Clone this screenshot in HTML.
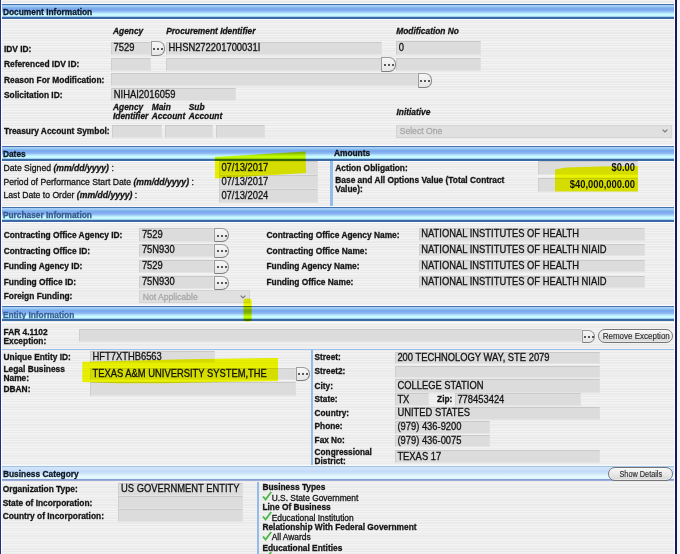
<!DOCTYPE html>
<html><head><meta charset="utf-8"><style>
*{margin:0;padding:0;box-sizing:border-box}
html,body{width:680px;height:554px;overflow:hidden;background:#f4f4f6}
body{position:relative;font-family:"Liberation Sans",sans-serif}
#pg{position:absolute;left:0;top:0;width:680px;height:554px;filter:blur(0.45px);
 background:repeating-linear-gradient(to bottom,#f2f2f2 0px,#f2f2f2 1.29px,#eaeaea 1.29px,#eaeaea 2.58px)}
.t{position:absolute;white-space:nowrap;line-height:1;-webkit-text-stroke:0.28px currentColor;transform:scaleY(1.1);transform-origin:0 0.8465em}
.ln{position:absolute}
.sv{position:absolute;overflow:visible}
.in{position:absolute;background:#dcdcdc;border-top:1px solid #c9c9c9;border-left:1px solid #cfcfcf;border-bottom:1px solid #e4e4e4;border-right:1px solid #e0e0e0}
.sel{background:#e0e0e0;border:1px solid #d4d4d4}
.btn{position:absolute;background:linear-gradient(#f6f6f6,#e6e6e6);border:1px solid #9c9c9c;border-bottom:1.4px solid #7e7e7e;border-right:1.3px solid #868686;border-radius:0 7px 7px 0}
.btn i{position:absolute;width:2px;height:2px;background:#262626;border-radius:50%}
.pill{position:absolute;border:1.2px solid #747474;border-radius:8px;background:linear-gradient(#f8f8f8,#e6e6e6 60%,#d4d4d4);text-align:center;color:#2c2c2c;line-height:11px;box-shadow:inset 0 0 0 0.6px #fafafa}
.pill span{display:inline-block;vertical-align:top;white-space:nowrap;-webkit-text-stroke:0.15px currentColor}
.hdr{position:absolute;border-top:1px solid #4672ac;border-bottom:2.3px solid #3a69a6;background:linear-gradient(to bottom,#aed0f8 0px,#9ccaf4 1.6px,#78aeea 3px,#80a8f0 4.5px,#8cb8f0 6.2px,#b4e4ff 8px,#c8fcff 9.4px,#c4f6ff 10.8px,#8ab8e0 100%)}
.hdr::before{content:"";position:absolute;left:0;right:0;top:-2px;height:1px;background:#fbfbfb}
.hdr::after{content:"";position:absolute;left:0;right:0;bottom:-3.3px;height:1px;background:#ffffff}
.hdr2{position:absolute;background:linear-gradient(to bottom,#98bcd8 0px,#a8c8e4 0.8px,#d4e6fc 1.6px,#c6dcf8 4.5px,#c4daf8 6px,#e2f8ff 10px,#e8fcff 12.4px,#8a9ed6 13.4px,#8a9ed6 14.3px,#c8d0ea 100%)}
.hdr2::before{content:"";position:absolute;left:0;right:0;top:-1.6px;height:1.4px;background:#f6f8ff}
#lb{position:absolute;left:0;top:0;width:1.3px;height:554px;background:#23307e}
#lw{position:absolute;left:1.3px;top:0;width:1px;height:554px;background:#fafafa}
#rw2{position:absolute;left:674px;top:0;width:1px;height:554px;background:#fafafa}
#rb{position:absolute;left:675.4px;top:0;width:1.9px;height:554px;background:#141a60}
#rw{position:absolute;left:677px;top:0;width:3px;height:554px;background:#f6f6f8}
</style></head>
<body><div id="pg">
<div class="hdr" style="left:2px;top:4px;width:672px;height:15.2px"></div>
<div class="t" style="left:2.9px;top:8.11px;font-size:8.4px;font-weight:bold;color:#0c1828;">Document Information</div>
<div class="t" style="left:113px;top:26.66px;font-size:8.37px;font-weight:bold;font-style:italic;color:#141414;">Agency</div>
<div class="t" style="left:166.25px;top:26.66px;font-size:8.37px;font-weight:bold;font-style:italic;color:#141414;">Procurement Identifier</div>
<div class="t" style="left:396.25px;top:26.66px;font-size:8.37px;font-weight:bold;font-style:italic;color:#141414;">Modification No</div>
<div class="t" style="left:4px;top:44.91px;font-size:8.37px;font-weight:bold;color:#141414;">IDV ID:</div>
<div class="in" style="left:111px;top:41.5px;width:40.00px;height:13.50px;"></div>
<div class="t" style="left:113.6px;top:43.28px;font-size:9.4px;font-weight:normal;color:#141414;transform:scaleY(1.12);">7529</div>
<div class="btn" style="left:151px;top:41px;width:13.75px;height:14.60px"><i style="left:1.28px;top:5.70px"></i><i style="left:5.28px;top:5.70px"></i><i style="left:9.28px;top:5.70px"></i></div>
<div class="in" style="left:166px;top:41.5px;width:215.75px;height:13.50px;"></div>
<div class="t" style="left:168.6px;top:43.28px;font-size:9.4px;font-weight:normal;color:#141414;transform:scaleY(1.12);">HHSN272201700031I</div>
<div class="in" style="left:396.25px;top:41.25px;width:84.50px;height:13.75px;"></div>
<div class="t" style="left:398.85px;top:43.15px;font-size:9.4px;font-weight:normal;color:#141414;transform:scaleY(1.12);">0</div>
<div class="t" style="left:4px;top:60.11px;font-size:8.37px;font-weight:bold;color:#141414;">Referenced IDV ID:</div>
<div class="in" style="left:111px;top:57.5px;width:40.00px;height:13.50px;"></div>
<div class="in" style="left:166px;top:57.5px;width:215.50px;height:13.50px;"></div>
<div class="btn" style="left:381.25px;top:56.75px;width:15.00px;height:15.00px"><i style="left:1.90px;top:5.90px"></i><i style="left:5.90px;top:5.90px"></i><i style="left:9.90px;top:5.90px"></i></div>
<div class="in" style="left:396.25px;top:57.5px;width:84.50px;height:13.25px;"></div>
<div class="t" style="left:4px;top:75.91px;font-size:8.37px;font-weight:bold;color:#141414;">Reason For Modification:</div>
<div class="in" style="left:111px;top:73px;width:306.50px;height:12.50px;"></div>
<div class="btn" style="left:417.5px;top:73px;width:14.50px;height:14.50px"><i style="left:1.65px;top:5.65px"></i><i style="left:5.65px;top:5.65px"></i><i style="left:9.65px;top:5.65px"></i></div>
<div class="t" style="left:4px;top:90.61px;font-size:8.37px;font-weight:bold;color:#141414;">Solicitation ID:</div>
<div class="in" style="left:111.25px;top:88.25px;width:125.00px;height:12.50px;"></div>
<div class="t" style="left:113.85px;top:89.53px;font-size:9.4px;font-weight:normal;color:#141414;transform:scaleY(1.12);">NIHAI2016059</div>
<div class="t" style="left:113px;top:103.11px;font-size:8.37px;font-weight:bold;font-style:italic;color:#141414;">Agency</div>
<div class="t" style="left:113px;top:112.31px;font-size:8.37px;font-weight:bold;font-style:italic;color:#141414;">Identifier</div>
<div class="t" style="left:151.75px;top:103.11px;font-size:8.37px;font-weight:bold;font-style:italic;color:#141414;">Main</div>
<div class="t" style="left:151.75px;top:112.31px;font-size:8.37px;font-weight:bold;font-style:italic;color:#141414;">Account</div>
<div class="t" style="left:188.75px;top:103.11px;font-size:8.37px;font-weight:bold;font-style:italic;color:#141414;">Sub</div>
<div class="t" style="left:188.75px;top:112.31px;font-size:8.37px;font-weight:bold;font-style:italic;color:#141414;">Account</div>
<div class="t" style="left:396.5px;top:107.61px;font-size:8.37px;font-weight:bold;font-style:italic;color:#141414;">Initiative</div>
<div class="t" style="left:4px;top:127.41px;font-size:8.37px;font-weight:bold;color:#141414;">Treasury Account Symbol:</div>
<div class="in" style="left:112px;top:124.5px;width:50.00px;height:13.00px;"></div>
<div class="in" style="left:164.5px;top:124.5px;width:48.50px;height:13.00px;"></div>
<div class="in" style="left:215.5px;top:124.5px;width:49.00px;height:13.00px;"></div>
<div class="in sel" style="left:396.2px;top:124.7px;width:275.60px;height:13.30px;"></div>
<div class="t" style="left:399.7px;top:127.17px;font-size:8.6px;font-weight:normal;color:#a8a8a8;">Select One</div>
<svg class="sv" style="left:660.8px;top:128.35px" width="8" height="6" viewBox="0 0 8 6"><path d="M1.6 1.6 L4 4 L6.4 1.6" fill="none" stroke="#7a7a7a" stroke-width="1.2"/></svg>
<div class="hdr" style="left:2px;top:146px;width:672px;height:15px"></div>
<div class="t" style="left:2.9px;top:149.69px;font-size:8.4px;font-weight:bold;color:#0c1828;">Dates</div>
<div class="t" style="left:333.9px;top:149.39px;font-size:8.4px;font-weight:bold;color:#141414;">Amounts</div>
<div class="t" style="left:3.5px;top:164.28px;font-size:8.65px;font-weight:normal;color:#141414;">Date Signed <b><i>(mm/dd/yyyy)</i></b> :</div>
<div class="t" style="left:3.5px;top:177.78px;font-size:8.65px;font-weight:normal;color:#141414;">Period of Performance Start Date <b><i>(mm/dd/yyyy)</i></b> :</div>
<div class="t" style="left:3.5px;top:191.28px;font-size:8.65px;font-weight:normal;color:#141414;">Last Date to Order <b><i>(mm/dd/yyyy)</i></b> :</div>
<div class="in" style="left:218.8px;top:161.3px;width:99.50px;height:13.90px;"></div>
<div class="t" style="left:221.4px;top:163.28px;font-size:9.4px;font-weight:normal;color:#141414;transform:scaleY(1.12);">07/13/2017</div>
<div class="in" style="left:218.8px;top:175.2px;width:99.50px;height:13.40px;"></div>
<div class="t" style="left:221.4px;top:176.93px;font-size:9.4px;font-weight:normal;color:#141414;transform:scaleY(1.12);">07/13/2017</div>
<div class="in" style="left:218.8px;top:188.6px;width:99.50px;height:14.30px;"></div>
<div class="t" style="left:221.4px;top:190.78px;font-size:9.4px;font-weight:normal;color:#141414;transform:scaleY(1.12);">07/13/2024</div>
<div class="ln" style="left:330px;top:161px;width:2.5px;height:45.5px;background:#94bcea"></div>
<div class="t" style="left:335.3px;top:164.11px;font-size:8.37px;font-weight:bold;color:#141414;">Action Obligation:</div>
<div class="t" style="left:335.3px;top:175.91px;font-size:8.37px;font-weight:bold;color:#141414;">Base and All Options Value (Total Contract</div>
<div class="t" style="left:335.3px;top:184.71px;font-size:8.37px;font-weight:bold;color:#141414;">Value):</div>
<div class="in" style="left:537.6px;top:160.6px;width:100.00px;height:14.10px;"></div>
<div class="t" style="left:537.6px;width:97.40px;text-align:right;top:162.68px;font-size:9.4px;font-weight:bold;color:#141414;-webkit-text-stroke:0">$0.00</div>
<div class="in" style="left:537.6px;top:177.8px;width:100.00px;height:14.10px;"></div>
<div class="t" style="left:537.6px;width:97.40px;text-align:right;top:179.88px;font-size:9.4px;font-weight:bold;color:#141414;-webkit-text-stroke:0">$40,000,000.00</div>
<div class="hdr" style="left:2px;top:207px;width:672px;height:15px"></div>
<div class="t" style="left:2.9px;top:210.73px;font-size:8.35px;font-weight:bold;color:#345a8a;">Purchaser Information</div>
<div class="t" style="left:3.7px;top:231.01px;font-size:8.37px;font-weight:bold;color:#141414;">Contracting Office Agency ID:</div>
<div class="in" style="left:139.3px;top:228.2px;width:74.70px;height:13.40px;"></div>
<div class="t" style="left:141.9px;top:229.93px;font-size:9.4px;font-weight:normal;color:#141414;transform:scaleY(1.12);">7529</div>
<div class="btn" style="left:214px;top:228.2px;width:14.80px;height:14.20px"><i style="left:1.80px;top:5.50px"></i><i style="left:5.80px;top:5.50px"></i><i style="left:9.80px;top:5.50px"></i></div>
<div class="t" style="left:266.5px;top:231.01px;font-size:8.37px;font-weight:bold;color:#141414;">Contracting Office Agency Name:</div>
<div class="in" style="left:418.7px;top:228px;width:226.30px;height:12.60px;"></div>
<div class="t" style="left:421.3px;top:229.33px;font-size:9.4px;font-weight:normal;color:#141414;transform:scaleY(1.12);">NATIONAL INSTITUTES OF HEALTH</div>
<div class="t" style="left:3.7px;top:246.51px;font-size:8.37px;font-weight:bold;color:#141414;">Contracting Office ID:</div>
<div class="in" style="left:139.3px;top:243.7px;width:74.70px;height:13.30px;"></div>
<div class="t" style="left:141.9px;top:245.38px;font-size:9.4px;font-weight:normal;color:#141414;transform:scaleY(1.12);">75N930</div>
<div class="btn" style="left:214px;top:243.7px;width:14.80px;height:14.10px"><i style="left:1.80px;top:5.45px"></i><i style="left:5.80px;top:5.45px"></i><i style="left:9.80px;top:5.45px"></i></div>
<div class="t" style="left:266.5px;top:246.51px;font-size:8.37px;font-weight:bold;color:#141414;">Contracting Office Name:</div>
<div class="in" style="left:418.7px;top:243.8px;width:226.30px;height:12.70px;"></div>
<div class="t" style="left:421.3px;top:245.18px;font-size:9.4px;font-weight:normal;color:#141414;transform:scaleY(1.12);">NATIONAL INSTITUTES OF HEALTH NIAID</div>
<div class="t" style="left:3.7px;top:262.31px;font-size:8.37px;font-weight:bold;color:#141414;">Funding Agency ID:</div>
<div class="in" style="left:139.3px;top:259.7px;width:74.70px;height:13.40px;"></div>
<div class="t" style="left:141.9px;top:261.43px;font-size:9.4px;font-weight:normal;color:#141414;transform:scaleY(1.12);">7529</div>
<div class="btn" style="left:214px;top:259.7px;width:14.80px;height:14.20px"><i style="left:1.80px;top:5.50px"></i><i style="left:5.80px;top:5.50px"></i><i style="left:9.80px;top:5.50px"></i></div>
<div class="t" style="left:266.5px;top:262.31px;font-size:8.37px;font-weight:bold;color:#141414;">Funding Agency Name:</div>
<div class="in" style="left:418.7px;top:259.7px;width:226.30px;height:12.70px;"></div>
<div class="t" style="left:421.3px;top:261.08px;font-size:9.4px;font-weight:normal;color:#141414;transform:scaleY(1.12);">NATIONAL INSTITUTES OF HEALTH</div>
<div class="t" style="left:3.7px;top:277.81px;font-size:8.37px;font-weight:bold;color:#141414;">Funding Office ID:</div>
<div class="in" style="left:139.3px;top:275.6px;width:74.70px;height:13.40px;"></div>
<div class="t" style="left:141.9px;top:277.33px;font-size:9.4px;font-weight:normal;color:#141414;transform:scaleY(1.12);">75N930</div>
<div class="btn" style="left:214px;top:275.6px;width:14.80px;height:14.20px"><i style="left:1.80px;top:5.50px"></i><i style="left:5.80px;top:5.50px"></i><i style="left:9.80px;top:5.50px"></i></div>
<div class="t" style="left:266.5px;top:277.81px;font-size:8.37px;font-weight:bold;color:#141414;">Funding Office Name:</div>
<div class="in" style="left:418.7px;top:275.6px;width:226.30px;height:12.70px;"></div>
<div class="t" style="left:421.3px;top:276.98px;font-size:9.4px;font-weight:normal;color:#141414;transform:scaleY(1.12);">NATIONAL INSTITUTES OF HEALTH NIAID</div>
<div class="t" style="left:3.7px;top:292.21px;font-size:8.37px;font-weight:bold;color:#141414;">Foreign Funding:</div>
<div class="in sel" style="left:139.3px;top:290.4px;width:111.10px;height:13.00px;"></div>
<div class="t" style="left:142.8px;top:292.72px;font-size:8.6px;font-weight:normal;color:#a8a8a8;">Not Applicable</div>
<svg class="sv" style="left:239.4px;top:293.9px" width="8" height="6" viewBox="0 0 8 6"><path d="M1.6 1.6 L4 4 L6.4 1.6" fill="none" stroke="#7a7a7a" stroke-width="1.2"/></svg>
<div class="hdr" style="left:2px;top:306.3px;width:672px;height:15.199999999999989px"></div>
<div class="t" style="left:2.9px;top:310.85px;font-size:8.36px;font-weight:bold;color:#365e96;">Entity Information</div>
<div class="t" style="left:3.5px;top:327.61px;font-size:8.37px;font-weight:bold;color:#141414;">FAR 4.1102</div>
<div class="t" style="left:3.5px;top:336.81px;font-size:8.37px;font-weight:bold;color:#141414;">Exception:</div>
<div class="in" style="left:78.6px;top:329.2px;width:503.40px;height:13.10px;"></div>
<div class="btn" style="left:582px;top:330px;width:13.30px;height:13.20px"><i style="left:1.05px;top:5.00px"></i><i style="left:5.05px;top:5.00px"></i><i style="left:9.05px;top:5.00px"></i></div>
<div class="pill" style="left:598px;top:329.3px;width:75.3px;height:13.4px"><span style="font-size:8.9px;transform:scaleX(0.9);line-height:12.2px">Remove Exception</span></div>
<div class="ln" style="left:2px;top:348.8px;width:672px;height:1.7px;background:#9cc0ec"></div>
<div class="ln" style="left:310.5px;top:349px;width:2.1px;height:117.19999999999999px;background:#94bcea"></div>
<div class="t" style="left:3.5px;top:353.41px;font-size:8.37px;font-weight:bold;color:#141414;">Unique Entity ID:</div>
<div class="t" style="left:3.5px;top:364.71px;font-size:8.37px;font-weight:bold;color:#141414;">Legal Business</div>
<div class="t" style="left:3.5px;top:373.81px;font-size:8.37px;font-weight:bold;color:#141414;">Name:</div>
<div class="t" style="left:3.5px;top:385.31px;font-size:8.37px;font-weight:bold;color:#141414;">DBAN:</div>
<div class="in" style="left:89.9px;top:350.6px;width:124.70px;height:12.20px;"></div>
<div class="t" style="left:92.5px;top:351.73px;font-size:9.4px;font-weight:normal;color:#141414;transform:scaleY(1.12);">HFT7XTHB6563</div>
<div class="in" style="left:89.9px;top:367.8px;width:205.70px;height:12.60px;"></div>
<div class="t" style="left:92.5px;top:369.13px;font-size:9.4px;font-weight:normal;color:#141414;transform:scaleY(1.12);">TEXAS A&amp;M UNIVERSITY SYSTEM,THE</div>
<div class="btn" style="left:295.6px;top:366.8px;width:14.50px;height:14.40px"><i style="left:1.65px;top:5.60px"></i><i style="left:5.65px;top:5.60px"></i><i style="left:9.65px;top:5.60px"></i></div>
<div class="in" style="left:89.9px;top:382.3px;width:205.70px;height:14.20px;"></div>
<div class="t" style="left:314.6px;top:354.21px;font-size:8.26px;font-weight:bold;color:#141414;">Street:</div>
<div class="in" style="left:394.8px;top:351.6px;width:205.50px;height:12.40px;"></div>
<div class="t" style="left:397.40000000000003px;top:352.83px;font-size:9.4px;font-weight:normal;color:#141414;transform:scaleY(1.12);">200 TECHNOLOGY WAY, STE 2079</div>
<div class="t" style="left:314.6px;top:367.91px;font-size:8.26px;font-weight:bold;color:#141414;">Street2:</div>
<div class="in" style="left:394.8px;top:365.6px;width:205.50px;height:12.50px;"></div>
<div class="t" style="left:314.6px;top:382.51px;font-size:8.26px;font-weight:bold;color:#141414;">City:</div>
<div class="in" style="left:394.8px;top:379.4px;width:205.50px;height:13.20px;"></div>
<div class="t" style="left:397.40000000000003px;top:381.03px;font-size:9.4px;font-weight:normal;color:#141414;transform:scaleY(1.12);">COLLEGE STATION</div>
<div class="t" style="left:314.6px;top:395.71px;font-size:8.26px;font-weight:bold;color:#141414;">State:</div>
<div class="in" style="left:394.8px;top:393.4px;width:34.40px;height:12.50px;"></div>
<div class="t" style="left:397.40000000000003px;top:394.68px;font-size:9.4px;font-weight:normal;color:#141414;transform:scaleY(1.12);">TX</div>
<div class="t" style="left:314.6px;top:409.71px;font-size:8.26px;font-weight:bold;color:#141414;">Country:</div>
<div class="in" style="left:394.8px;top:407.2px;width:205.50px;height:12.40px;"></div>
<div class="t" style="left:397.40000000000003px;top:408.43px;font-size:9.4px;font-weight:normal;color:#141414;transform:scaleY(1.12);">UNITED STATES</div>
<div class="t" style="left:314.6px;top:423.01px;font-size:8.26px;font-weight:bold;color:#141414;">Phone:</div>
<div class="in" style="left:394.8px;top:421.2px;width:95.20px;height:12.50px;"></div>
<div class="t" style="left:397.40000000000003px;top:422.48px;font-size:9.4px;font-weight:normal;color:#141414;transform:scaleY(1.12);">(979) 436-9200</div>
<div class="t" style="left:314.6px;top:436.71px;font-size:8.26px;font-weight:bold;color:#141414;">Fax No:</div>
<div class="in" style="left:394.8px;top:435px;width:95.20px;height:11.90px;"></div>
<div class="t" style="left:397.40000000000003px;top:435.98px;font-size:9.4px;font-weight:normal;color:#141414;transform:scaleY(1.12);">(979) 436-0075</div>
<div class="t" style="left:437.1px;top:395.71px;font-size:8.26px;font-weight:bold;color:#141414;">Zip:</div>
<div class="in" style="left:454.8px;top:393.4px;width:125.80px;height:12.50px;"></div>
<div class="t" style="left:457.40000000000003px;top:394.68px;font-size:9.4px;font-weight:normal;color:#141414;transform:scaleY(1.12);">778453424</div>
<div class="t" style="left:314.6px;top:449.11px;font-size:8.26px;font-weight:bold;color:#141414;">Congressional</div>
<div class="t" style="left:314.6px;top:457.61px;font-size:8.26px;font-weight:bold;color:#141414;">District:</div>
<div class="in" style="left:394.8px;top:450.3px;width:205.50px;height:12.50px;"></div>
<div class="t" style="left:397.40000000000003px;top:451.58px;font-size:9.4px;font-weight:normal;color:#141414;transform:scaleY(1.12);">TEXAS 17</div>
<div class="hdr2" style="left:2px;top:466.2px;width:672px;height:14.800000000000011px"></div>
<div class="t" style="left:2.9px;top:469.77px;font-size:8.4px;font-weight:bold;color:#0c1828;">Business Category</div>
<div class="pill" style="left:608px;top:466.8px;width:65.4px;height:14.4px"><span style="font-size:8.5px;transform:scaleX(0.86);line-height:13.2px">Show Details</span></div>
<div class="t" style="left:2.7px;top:485.21px;font-size:8.37px;font-weight:bold;color:#141414;">Organization Type:</div>
<div class="t" style="left:2.7px;top:498.61px;font-size:8.37px;font-weight:bold;color:#141414;">State of Incorporation:</div>
<div class="t" style="left:2.7px;top:511.91px;font-size:8.37px;font-weight:bold;color:#141414;">Country of Incorporation:</div>
<div class="in" style="left:118.4px;top:482.6px;width:124.30px;height:13.10px;"></div>
<div class="t" style="left:121.0px;top:484.18px;font-size:9.4px;font-weight:normal;color:#141414;transform:scaleY(1.12);">US GOVERNMENT ENTITY</div>
<div class="in" style="left:118.4px;top:495.7px;width:124.30px;height:13.40px;"></div>
<div class="in" style="left:118.4px;top:509.1px;width:124.30px;height:13.40px;"></div>
<div class="ln" style="left:256.5px;top:482px;width:2.2px;height:72px;background:#94bcea"></div>
<div class="t" style="left:262.4px;top:482.71px;font-size:8.37px;font-weight:bold;color:#141414;">Business Types</div>
<div class="t" style="left:262.4px;top:503.11px;font-size:8.37px;font-weight:bold;color:#141414;">Line Of Business</div>
<div class="t" style="left:262.4px;top:523.01px;font-size:8.37px;font-weight:bold;color:#141414;">Relationship With Federal Government</div>
<div class="t" style="left:262.4px;top:543.51px;font-size:8.37px;font-weight:bold;color:#141414;">Educational Entities</div>
<div class="t" style="left:271.7px;top:493.79px;font-size:8.4px;font-weight:normal;color:#141414;">U.S. State Government</div>
<svg class="sv" style="left:262px;top:491.09999999999997px" width="10" height="10" viewBox="0 0 10 10"><path d="M1 5.5 L3.6 8.5 L9.2 1" fill="none" stroke="#4cb84c" stroke-width="1.9"/></svg>
<div class="t" style="left:271.7px;top:513.69px;font-size:8.4px;font-weight:normal;color:#141414;">Educational Institution</div>
<svg class="sv" style="left:262px;top:510.99999999999994px" width="10" height="10" viewBox="0 0 10 10"><path d="M1 5.5 L3.6 8.5 L9.2 1" fill="none" stroke="#4cb84c" stroke-width="1.9"/></svg>
<div class="t" style="left:271.7px;top:533.49px;font-size:8.4px;font-weight:normal;color:#141414;">All Awards</div>
<svg class="sv" style="left:262px;top:530.8000000000001px" width="10" height="10" viewBox="0 0 10 10"><path d="M1 5.5 L3.6 8.5 L9.2 1" fill="none" stroke="#4cb84c" stroke-width="1.9"/></svg>
<svg class="sv" style="left:262px;top:551px" width="10" height="10" viewBox="0 0 10 10"><path d="M1 5.5 L3.6 8.5 L9.2 1" fill="none" stroke="#4cb84c" stroke-width="1.9"/></svg>
<svg class="sv" style="left:0;top:0;mix-blend-mode:multiply" width="680" height="554" viewBox="0 0 680 554"><g fill="#f6ff00"><polygon points="215,157 305.5,151.5 306,173 215,178.5" /><polygon points="555,169.5 566,167.5 600,166.5 638,166 638,191.5 555,191.5" /><path d="M82.3,361.7 L185,359.3 L278,358 L278,381 L185,382.7 C150,383.8 110,383.5 82.3,382 Z" /><rect x="243.5" y="298.4" width="8.2" height="23.2" rx="3" ry="3" /></g></svg>
<div id="lb"></div><div id="lw"></div><div id="rw2"></div><div id="rb"></div><div id="rw"></div>
</div></body></html>
